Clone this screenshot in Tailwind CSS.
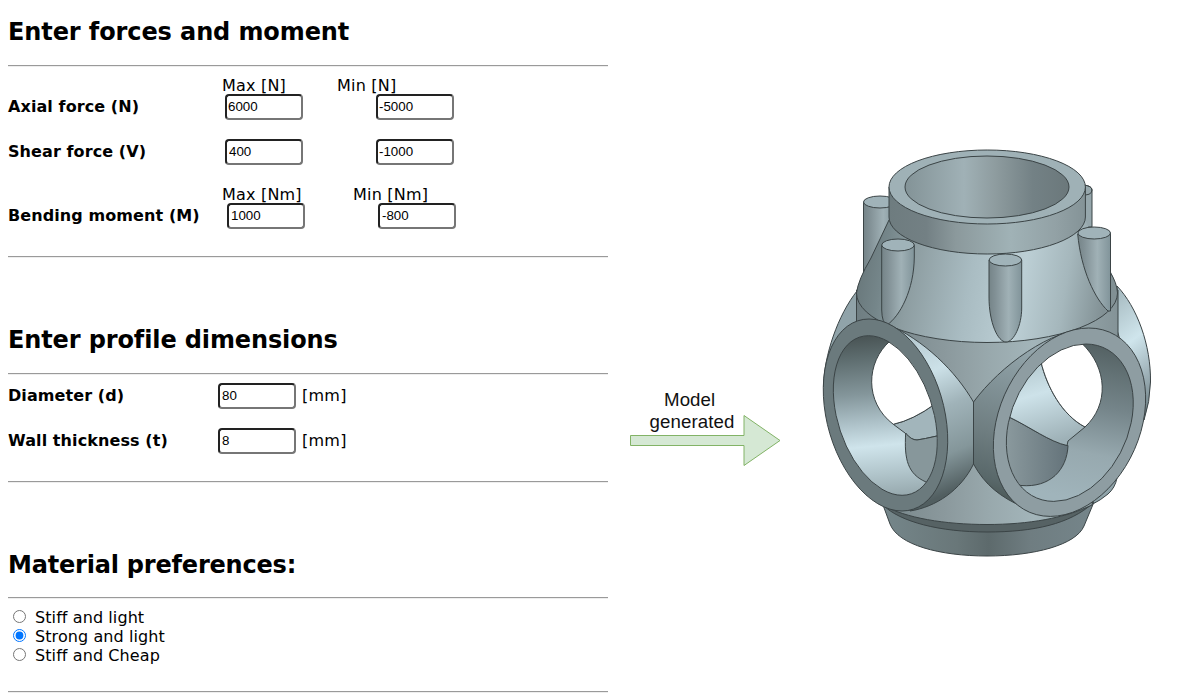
<!DOCTYPE html>
<html lang="en">
<head>
<meta charset="utf-8">
<title>Joint generator</title>
<script src="https://cdn.jsdelivr.net/npm/@tailwindcss/browser@4"></script>
</head>
<body class="bg-white text-black overflow-hidden font-['DejaVu_Sans',sans-serif]">
<div class="flex w-[1183px] h-[700px]">
  <form class="w-[599.5px] ml-2 shrink-0 text-[16px] leading-[19px] tracking-[0.09px]">
    <h2 class="h-[65px] pt-[17px] text-[24px] leading-[30px] font-bold whitespace-nowrap"><span class="tracking-[-0.1px]">Enter forces and moment</span></h2>
    <div class="h-[2px] border-t border-t-[#9a9a9a] border-b border-b-[#eeeeee]"></div>
    <div class="h-[189px] pt-[9px]">
      <div class="flex h-[18px] whitespace-nowrap tracking-[0.2px]"><span class="ml-[214px] w-[115px]">Max [N]</span><span>Min [N]</span></div>
      <div class="flex h-[45px]">
        <b class="w-[217px] pt-[3px]">Axial force (N)</b>
        <input class="w-[78px] h-[26px] border-2 border-t-[#222] border-l-[#222] border-r-[#767676] border-b-[#767676] rounded-[4px] px-px pb-[2px] text-[13.33px] leading-[20px] tracking-normal font-['Liberation_Sans',sans-serif]" value="6000">
        <input class="ml-[73px] w-[78px] h-[26px] border-2 border-t-[#222] border-l-[#222] border-r-[#767676] border-b-[#767676] rounded-[4px] px-px pb-[2px] text-[13.33px] leading-[20px] tracking-normal font-['Liberation_Sans',sans-serif]" value="-5000">
      </div>
      <div class="flex h-[46px]">
        <b class="w-[217px] pt-[3px]">Shear force (V)</b>
        <input class="w-[78px] h-[26px] border-2 border-t-[#222] border-l-[#222] border-r-[#767676] border-b-[#767676] rounded-[4px] px-[2px] pb-[2px] text-[13.33px] leading-[20px] tracking-normal font-['Liberation_Sans',sans-serif]" value="400">
        <input class="ml-[73px] w-[78px] h-[26px] border-2 border-t-[#222] border-l-[#222] border-r-[#767676] border-b-[#767676] rounded-[4px] px-px pb-[2px] text-[13.33px] leading-[20px] tracking-normal font-['Liberation_Sans',sans-serif]" value="-1000">
      </div>
      <div class="flex h-[18px] whitespace-nowrap tracking-[0.2px]"><span class="ml-[214px] w-[131px]">Max [Nm]</span><span>Min [Nm]</span></div>
      <div class="flex">
        <b class="w-[219px] pt-[3px] whitespace-nowrap">Bending moment (M)</b>
        <input class="w-[78px] h-[26px] border-2 border-t-[#222] border-l-[#222] border-r-[#767676] border-b-[#767676] rounded-[4px] px-[2px] pb-[2px] text-[13.33px] leading-[20px] tracking-normal font-['Liberation_Sans',sans-serif]" value="1000">
        <input class="ml-[73px] w-[78px] h-[26px] border-2 border-t-[#222] border-l-[#222] border-r-[#767676] border-b-[#767676] rounded-[4px] px-[2px] pb-[2px] text-[13.33px] leading-[20px] tracking-normal font-['Liberation_Sans',sans-serif]" value="-800">
      </div>
    </div>
    <div class="h-[2px] border-t border-t-[#9a9a9a] border-b border-b-[#eeeeee]"></div>
    <h2 class="h-[115px] pt-[67px] text-[24px] leading-[30px] font-bold whitespace-nowrap"><span class="tracking-[-0.12px]">Enter profile dimensions</span></h2>
    <div class="h-[2px] border-t border-t-[#9a9a9a] border-b border-b-[#eeeeee]"></div>
    <div class="h-[106px] pt-[8px]">
      <div class="flex h-[45px]">
        <b class="w-[210px] pt-[3px]">Diameter (d)</b>
        <input class="w-[78px] h-[26px] border-2 border-t-[#222] border-l-[#222] border-r-[#767676] border-b-[#767676] rounded-[4px] px-[2px] pb-[2px] text-[13.33px] leading-[20px] tracking-normal font-['Liberation_Sans',sans-serif]" value="80">
        <span class="ml-[6px] pt-[3px] tracking-[0.25px]">[mm]</span>
      </div>
      <div class="flex">
        <b class="w-[210px] pt-[3px]">Wall thickness (t)</b>
        <input class="w-[78px] h-[26px] border-2 border-t-[#222] border-l-[#222] border-r-[#767676] border-b-[#767676] rounded-[4px] px-[2px] pb-[2px] text-[13.33px] leading-[20px] tracking-normal font-['Liberation_Sans',sans-serif]" value="8">
        <span class="ml-[6px] pt-[3px] tracking-[0.25px]">[mm]</span>
      </div>
    </div>
    <div class="h-[2px] border-t border-t-[#9a9a9a] border-b border-b-[#eeeeee]"></div>
    <h2 class="h-[114px] pt-[67px] text-[24px] leading-[30px] font-bold whitespace-nowrap"><span class="tracking-[-0.2px]">Material preferences:</span></h2>
    <div class="h-[2px] border-t border-t-[#9a9a9a] border-b border-b-[#eeeeee]"></div>
    <div class="h-[92px] pt-[9px]">
      <label class="flex h-[19px]"><input type="radio" name="m" class="w-[13px] h-[13px] ml-[5px] mt-[2px] mr-[9px]">Stiff and light</label>
      <label class="flex h-[19px]"><input type="radio" name="m" checked class="w-[13px] h-[13px] ml-[5px] mt-[2px] mr-[9px]">Strong and light</label>
      <label class="flex h-[19px]"><input type="radio" name="m" class="w-[13px] h-[13px] ml-[5px] mt-[2px] mr-[9px]">Stiff and Cheap</label>
    </div>
    <div class="h-[2px] border-t border-t-[#9a9a9a] border-b border-b-[#eeeeee]"></div>
  </form>

  <div class="w-[192px] ml-[15.5px] shrink-0 pt-[389px] font-['Liberation_Sans',sans-serif] text-[18.67px] leading-[22px] tracking-[0.1px] text-[#111]">
    <p class="ml-[41px]">Model</p>
    <p class="ml-[26.5px]">generated</p>
    <svg class="block -mt-[19px] w-[160px] h-[54px]" viewBox="623 414 160 54"><path d="M630.5 435.500H744V415.500L780 440.500 744 465.500V445.500H630.500Z" fill="#d5e8d4" stroke="#82b366"/></svg>
  </div>

  <svg class="block w-[345px] h-[425px] mt-[140px] shrink-0" viewBox="815 140 345 425" fill="none" stroke="#3b4446" stroke-width="1" stroke-linejoin="round">
    <defs>
      <linearGradient id="bore"><stop stop-color="#839397"/><stop offset=".36" stop-color="#a0b1b6"/><stop offset=".55" stop-color="#8e9c9f"/><stop offset=".78" stop-color="#738185"/><stop offset="1" stop-color="#6b787b"/></linearGradient>
      <linearGradient id="collar"><stop stop-color="#6e7c7f"/><stop offset=".19" stop-color="#738084"/><stop offset=".34" stop-color="#8b999c"/><stop offset=".62" stop-color="#a0b2b6"/><stop offset=".85" stop-color="#92a1a5"/><stop offset="1" stop-color="#849397"/></linearGradient>
      <linearGradient id="cone" x2="1" y2=".08"><stop stop-color="#647275"/><stop offset=".13" stop-color="#75868a"/><stop offset=".24" stop-color="#8d9da1"/><stop offset=".47" stop-color="#a9bcc2"/><stop offset=".67" stop-color="#bccfd5"/><stop offset=".84" stop-color="#a5b7bc"/><stop offset="1" stop-color="#819094"/></linearGradient>
      <linearGradient id="body"><stop stop-color="#6f7e82"/><stop offset=".34" stop-color="#8b999d"/><stop offset=".5" stop-color="#98a8ac"/><stop offset=".68" stop-color="#a3b5ba"/><stop offset="1" stop-color="#849397"/></linearGradient>
      <linearGradient id="base"><stop stop-color="#75868a"/><stop offset=".35" stop-color="#697779"/><stop offset=".5" stop-color="#5d6a6c"/><stop offset=".7" stop-color="#6f7d81"/><stop offset="1" stop-color="#75858a"/></linearGradient>
      <linearGradient id="peg"><stop stop-color="#758488"/><stop offset=".2" stop-color="#829196"/><stop offset=".6" stop-color="#a0b1b6"/><stop offset="1" stop-color="#81949a"/></linearGradient>
      <linearGradient id="tubeL" x1=".3" y1="0" x2=".5" y2="1"><stop stop-color="#a5bac1"/><stop offset=".13" stop-color="#bdd1d8"/><stop offset=".29" stop-color="#cce1e8"/><stop offset=".5" stop-color="#a0b3b9"/><stop offset=".75" stop-color="#84969a"/><stop offset=".95" stop-color="#515e60"/></linearGradient>
      <linearGradient id="tubeR" x1=".4" y1="0" x2=".2" y2="1"><stop stop-color="#9aacb2"/><stop offset=".3" stop-color="#84959a"/><stop offset=".6" stop-color="#6f7e81"/><stop offset=".85" stop-color="#59686a"/><stop offset="1" stop-color="#46524f"/></linearGradient>
      <linearGradient id="holeL" gradientUnits="userSpaceOnUse" x1="875" y1="337" x2="890" y2="496"><stop stop-color="#4b5657"/><stop offset=".12" stop-color="#5d6c6e"/><stop offset=".35" stop-color="#84969b"/><stop offset=".53" stop-color="#adc1c8"/><stop offset=".68" stop-color="#cfe4eb"/><stop offset=".86" stop-color="#b0c4ca"/><stop offset="1" stop-color="#97a9ae"/></linearGradient>
      <linearGradient id="holeR" gradientUnits="userSpaceOnUse" x1="1110" y1="345" x2="1080" y2="500"><stop stop-color="#536062"/><stop offset=".18" stop-color="#637275"/><stop offset=".4" stop-color="#75858a"/><stop offset=".7" stop-color="#97a9af"/><stop offset="1" stop-color="#a0b4bb"/></linearGradient>
      <linearGradient id="farR" x1=".3" y1="0" x2=".5" y2="1"><stop stop-color="#a8bcc2"/><stop offset=".42" stop-color="#cfe5ec"/><stop offset=".7" stop-color="#a6b9c0"/><stop offset="1" stop-color="#73858a"/></linearGradient>
      <linearGradient id="inR" x1=".2" y1="0" x2=".5" y2="1"><stop stop-color="#b1c6cc"/><stop offset=".42" stop-color="#cde2e9"/><stop offset="1" stop-color="#9eb1b7"/></linearGradient>
      <linearGradient id="shade"><stop stop-color="#8e9da1"/><stop offset="1" stop-color="#64737a"/></linearGradient>
      <clipPath id="cl"><circle r="1" transform="matrix(49.2 0 16.8 79.8 885.3 415.5)"/></clipPath>
      <clipPath id="cr"><circle r="1" transform="matrix(61.4 0 -16 78.7 1069.8 422.7)"/></clipPath>
    </defs>
    <!-- rear pegs and rear openings -->
    <path d="M863.5 202V274L880 250 896.500 240V202Z" fill="url(#peg)"/>
    <ellipse cx="880" cy="202" rx="16.500" ry="6" fill="#a0b3b9"/>
    <path d="M1080 185V227H1092V190Q1092 186 1084 185Z" fill="#96a7ac"/>
    <path d="M1080 195Q1092 196 1092 190Q1092 186 1084 185"/>
    <path d="M823.500 387C824 355 838 315 857 291L880 322 836 360Z" fill="#90a3a9"/>
    <path d="M1117 286C1137 307 1151 345 1150.500 382Q1150 402 1144 420L1117 330Z" fill="url(#farR)"/>
    <path d="M1117 478Q1115 488 1108 494T1091 505L1080 480Z" fill="#8fa3a9"/>
    <!-- base ring -->
    <path d="M883 505L890 524C898 545 940 556 987 556S1076 545 1084 526L1094 502Z" fill="url(#base)"/>
    <path d="M883 505C900 522 940 532 987 532S1070 524 1093 503L1060 490 900 490Z" fill="#566264"/>
    <!-- body -->
    <path d="M856.500 290V360L883 505C905 518 945 524.500 987 524.500S1065 518 1092 505L1118 360V290Z" fill="url(#body)"/>
    <!-- cone -->
    <path d="M889 220L871 258Q858 280 856.500 293A130.500 49.500 0 0 0 1117.500 293Q1117 284 1110 270L1085 220Z" fill="url(#cone)" stroke="none"/>
    <path d="M889 220L871 258Q858 280 856.500 293A130.500 49.500 0 0 0 1117.500 293Q1117 283 1110 272"/>
    <!-- collar -->
    <path d="M889 187V217A98.200 37 0 0 0 1085.400 217V187Z" fill="url(#collar)"/>
    <ellipse cx="987.200" cy="187" rx="98.200" ry="37" fill="#9fb1b6"/>
    <ellipse cx="987" cy="187" rx="82" ry="31" fill="url(#bore)"/>
    <!-- front pegs -->
    <path d="M881.700 245V310Q882 323 887 325C900 316 914 290 914.300 257V245Z" fill="url(#peg)"/>
    <ellipse cx="898" cy="245" rx="16.300" ry="6" fill="#a0b3b9"/>
    <path d="M989 260V297C989 323 998 342 1006 342S1021.700 325 1021.700 308V260Z" fill="url(#peg)"/>
    <ellipse cx="1005.400" cy="260" rx="16.300" ry="6" fill="#a0b3b9"/>
    <path d="M1077.700 234C1081 270 1095 299 1108 311H1110.500V233Z" fill="url(#peg)"/>
    <ellipse cx="1094.200" cy="233" rx="16.300" ry="6" fill="#a0b3b9"/>
    <!-- side tubes -->
    <path d="M885 323C925 340 956 372 973.500 402V464C961 490 936 507 910 511Z" fill="url(#tubeL)"/>
    <path d="M1090 329C1052 328 1000 366 973.500 402V464C985 485 1000 497 1025 508Z" fill="url(#tubeR)"/>
    <!-- left opening -->
    <circle r="1" transform="matrix(60 0 16.500 96 885.500 415)" fill="#6b7a7d" vector-effect="non-scaling-stroke"/>
    <g clip-path="url(#cl)">
      <rect x="825" y="330" width="120" height="170" fill="url(#holeL)" stroke="none"/>
      <path d="M893.300 424.300Q913 420 935 404L950 434 937 436Q924 439 917 440Q911 440 905 433Z" fill="#a2b5bb"/>
      <path d="M905.700 433C904 460 908 474 926 482L945 480V435L937 436Q924 439 917 440Q911 440 905.700 433Z" fill="#87979b"/>
      <path d="M890 341C866 362 864 402 893.300 424.300Q913 420 935 404L930 370 905 340Z" fill="#fff"/>
    </g>
    <circle r="1" transform="matrix(49.200 0 16.800 79.800 885.300 415.500)" vector-effect="non-scaling-stroke"/>
    <!-- right opening -->
    <circle r="1" transform="matrix(73.700 0 -19.200 94.200 1069.500 422.200)" fill="#8e9da2" vector-effect="non-scaling-stroke"/>
    <g clip-path="url(#cr)">
      <rect x="1000" y="340" width="140" height="170" fill="url(#holeR)" stroke="none"/>
      <path d="M1005 415L1009 417C1030 427 1050 442 1068 445.500C1067 470 1050 488 1021 485.500L1000 480Z" fill="url(#shade)"/>
      <path d="M1041 362L1000 380 1009 417C1030 427 1050 442 1067 445.500L1068 441 1085 427C1062 415 1047 387 1041 362Z" fill="url(#inR)"/>
      <path d="M1081.500 343C1108 368 1109 405 1085 427C1062 415 1047 387 1041 362L1055 335Z" fill="#fff"/>
    </g>
    <circle r="1" transform="matrix(61.400 0 -16 78.700 1069.800 422.700)" vector-effect="non-scaling-stroke"/>
  </svg>
</div>
</body>
</html>
